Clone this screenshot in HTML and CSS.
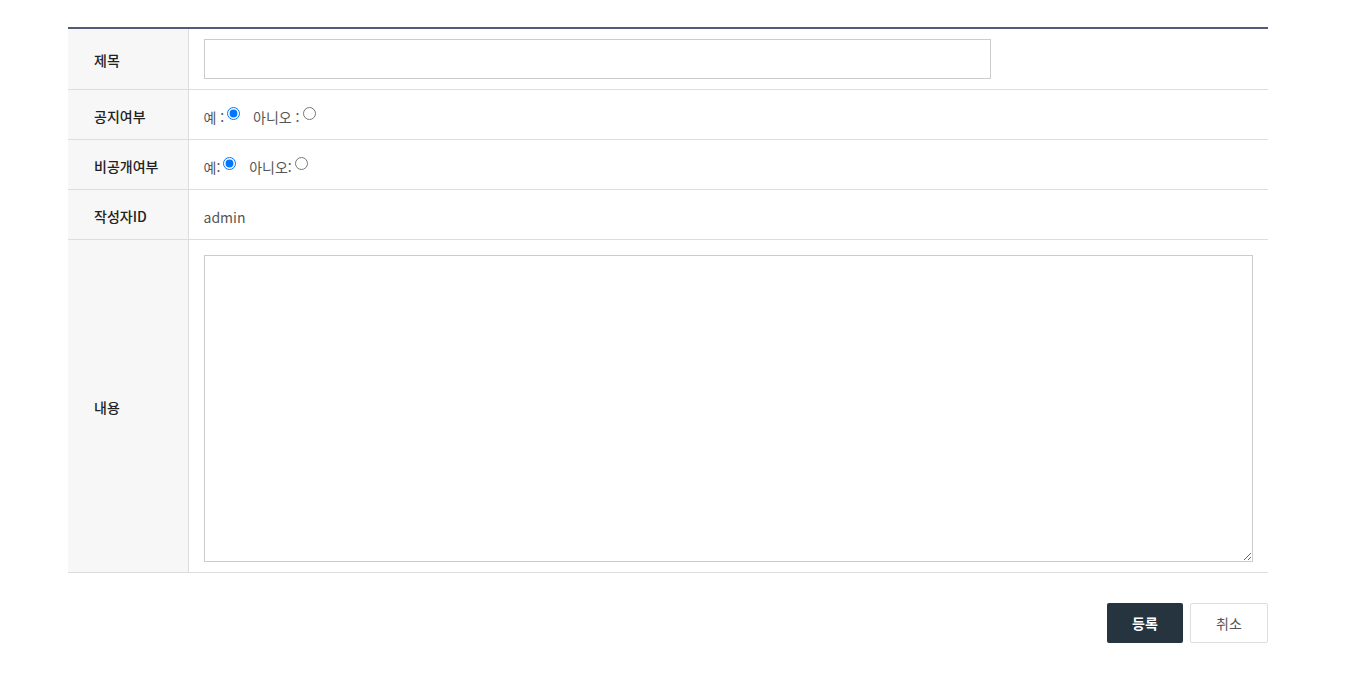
FILE: index.html
```html
<!DOCTYPE html>
<html lang="ko">
  <head>
    <meta charset="UTF-8" />
    <meta name="viewport" content="width=device-width, initial-scale=1.0" />
    <title>게시글 등록</title>
    <link rel="stylesheet" href="styles.css">
  </head>
  <body>
    <div class="board-write">
      <table class="write-table">
        <colgroup>
          <col class="col-head" />
          <col />
        </colgroup>
        <tr>
          <th>제목</th>
          <td><input type="text" class="title-input" /></td>
        </tr>
        <tr>
          <th>공지여부</th>
          <td class="radio-cell">
            예 :<input type="radio" name="notice" checked />
            &nbsp;아니오 :<input type="radio" name="notice" />
          </td>
        </tr>
        <tr>
          <th>비공개여부</th>
          <td class="radio-cell">
            예:<input type="radio" name="secret" checked />
            &nbsp;아니오:<input type="radio" name="secret" />
          </td>
        </tr>
        <tr>
          <th>작성자ID</th>
          <td class="writer">admin</td>
        </tr>
        <tr>
          <th>내용</th>
          <td class="content-cell"><textarea class="content-input"></textarea></td>
        </tr>
      </table>
      <div class="btn-area">
        <button class="btn btn-submit">등록</button>
        <button class="btn btn-cancel">취소</button>
      </div>
    </div>
  </body>
</html>
```

FILE: styles.css
```css
body {
  font-family: "Noto Sans CJK KR", "Noto Sans", sans-serif;
  color: #222;
  background-color: #fff;
  margin: 0;
  padding: 0;
}
.board-write {
  width: 1200px;
  margin: 0 0 0 68px;
  padding-top: 27px;
}
.write-table {
  width: 100%;
  border-collapse: collapse;
  border-top: 2px solid #555a78;
}
.col-head {
  width: 120px;
}
.write-table th {
  background: #f7f7f7;
  border-right: 1px solid #ddd;
  border-bottom: 1px solid #ddd;
  text-align: left;
  padding: 2px 0 0 26px;
  font-size: 14px;
  font-weight: 500;
  color: #222;
}
.write-table td {
  border-bottom: 1px solid #ddd;
  padding: 10px 15px;
  font-size: 14px;
  color: #555;
  height: 29px;
}
.write-table td.radio-cell,
.write-table td.writer {
  padding: 12px 15px 8px;
}
.title-input {
  display: block;
  width: 75%;
  height: 40px;
  box-sizing: border-box;
  border: 1px solid #ccc;
  margin: 0;
}
.radio-cell input {
  margin: 0 5px 0 3px;
  vertical-align: 3px;
}
.writer {
  font-size: 15px;
}
.write-table td.content-cell {
  padding-top: 15px;
}
.content-input {
  display: block;
  width: 100%;
  height: 307px;
  box-sizing: border-box;
  border: 1px solid #ccc;
  margin: 0;
  resize: vertical;
}
.btn-area {
  display: flex;
  justify-content: flex-end;
  gap: 7px;
  margin-top: 30px;
}
.btn {
  height: 40px;
  font-family: inherit;
  font-size: 14px;
  border-radius: 2px;
  cursor: pointer;
}
.btn-submit {
  width: 76px;
  background: #263440;
  color: #fff;
  font-weight: bold;
  border: none;
}
.btn-cancel {
  width: 78px;
  background: #fff;
  color: #555;
  border: 1px solid #ddd;
}
```
